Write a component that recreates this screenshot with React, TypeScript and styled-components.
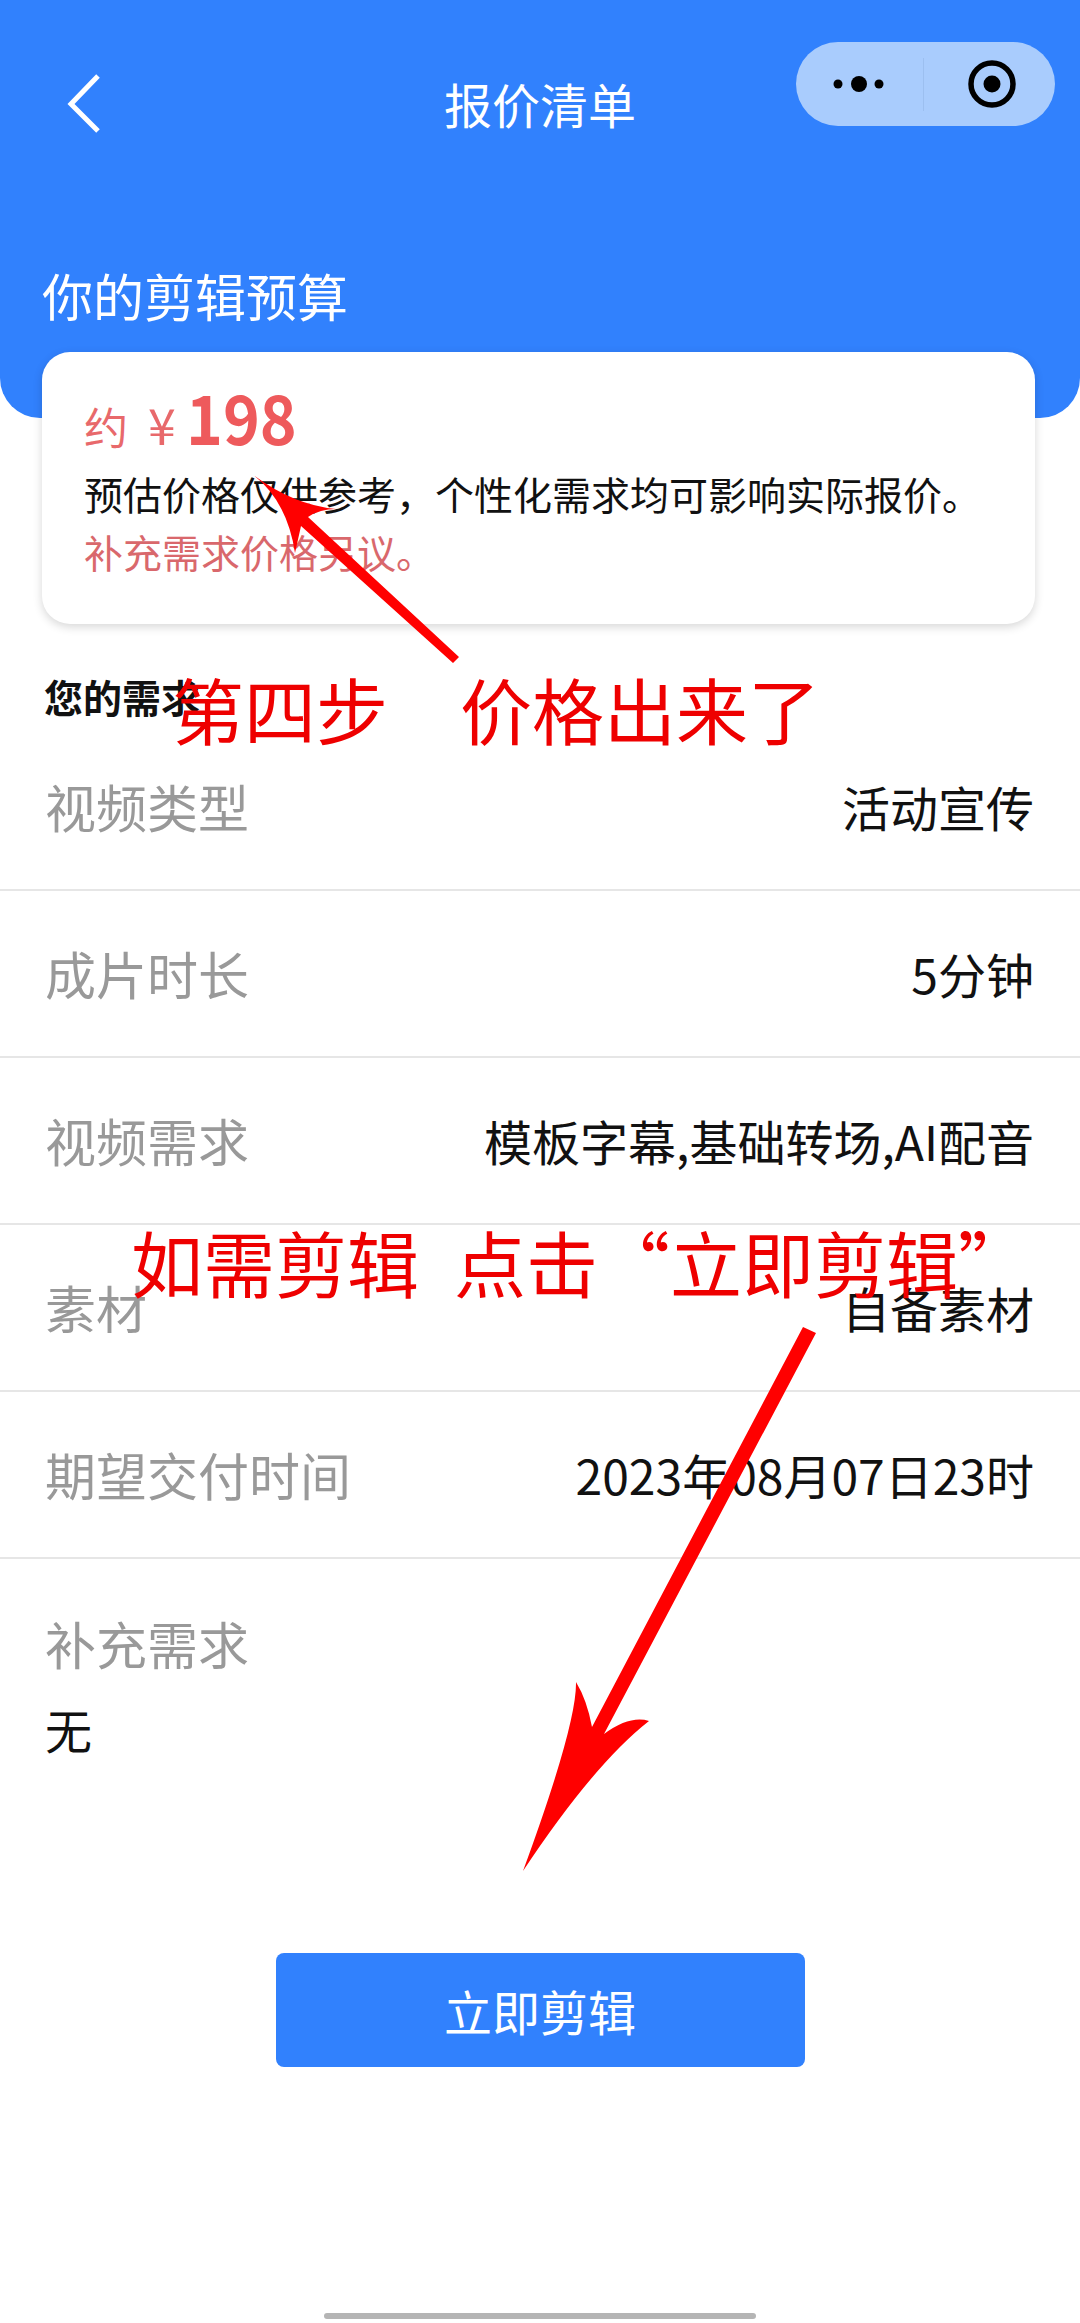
import React from "react";
import styled, { createGlobalStyle } from "styled-components";

const Global = createGlobalStyle`
  html, body { margin: 0; padding: 0; background: #fff; }
  body { font-family: "Noto Sans CJK SC", "Noto Sans", sans-serif; }
  * { box-sizing: border-box; }
`;

const Page = styled.div`
  position: relative;
  width: 1080px;
  height: 2323px;
  background: #fff;
  overflow: hidden;
`;

const Header = styled.header`
  height: 418px;
  background: #3181fd;
  border-radius: 0 0 40px 40px;
  padding: 42px 25px 0 42px;
`;

const NavBar = styled.div`
  position: relative;
  height: 84px;
  display: flex;
  align-items: flex-start;
  justify-content: space-between;
`;

const BackIcon = styled.svg`
  margin: 29px 0 0 22px;
`;

const NavTitle = styled.h1`
  position: absolute;
  left: -42px;
  right: -25px;
  top: 33px;
  margin: 0;
  text-align: center;
  font-size: 48px;
  line-height: 56px;
  font-weight: 400;
  color: #fff;
`;

const Capsule = styled.div`
  width: 259px;
  height: 84px;
  border-radius: 42px;
  background: #a9ccfd;
  display: flex;
  align-items: center;
`;

const CapsuleCell = styled.div<{ $inset?: number }>`
  flex: 1;
  height: 100%;
  display: flex;
  align-items: center;
  justify-content: center;
  padding-left: ${(p) => p.$inset ?? 0}px;
`;

const CapsuleDivider = styled.div`
  width: 1px;
  height: 53px;
  background: #9cbff0;
`;

const BudgetTitle = styled.h2`
  margin: 139px 0 0 0;
  font-size: 51px;
  line-height: 60px;
  font-weight: 400;
  color: #fff;
`;

const PriceCard = styled.section`
  margin: -66px 45px 0 42px;
  height: 272px;
  background: #fff;
  border-radius: 28px;
  box-shadow: 0 3px 10px rgba(0, 0, 0, 0.16);
  padding: 27px 42px 0;
  position: relative;
`;

const PriceRow = styled.div`
  display: flex;
  align-items: baseline;
  height: 85px;
  color: #ee5a5c;
`;

const PriceLabel = styled.span`
  font-size: 44px;
  line-height: 82px;
  margin-right: 20px;
  color: #e8696b;
`;

const PriceYen = styled.span`
  font-size: 50px;
  line-height: 82px;
  margin-right: 10px;
  color: #e8696b;
`;

const PriceValue = styled.span`
  display: inline-block;
  font-size: 68px;
  line-height: 74px;
  font-weight: 700;
  transform: scaleX(0.92);
  transform-origin: left center;
`;

const Note = styled.p<{ $accent?: boolean }>`
  margin: 0;
  font-size: 39px;
  line-height: 58px;
  white-space: nowrap;
  color: ${(p) => (p.$accent ? "#d9686c" : "#111")};
`;

const NeedsTitle = styled.h3`
  margin: 47px 0 0 44px;
  font-size: 39px;
  line-height: 50px;
  font-weight: 700;
  color: #111;
`;

const Rows = styled.div`
  margin-top: 3px;
`;

const Row = styled.div`
  height: 167px;
  padding: 0 46px 2px 45px;
  border-bottom: 2px solid #e6e6e6;
  display: flex;
  align-items: center;
  justify-content: space-between;
`;

const RowKey = styled.span`
  font-size: 51px;
  color: #999;
`;

const RowValue = styled.span`
  font-size: 48px;
  color: #111;
`;

const Extra = styled.div`
  padding: 52px 46px 0 45px;
  height: 394px;
`;

const ExtraValue = styled.div`
  margin-top: 24px;
  font-size: 47px;
  line-height: 60px;
  color: #111;
`;

const ExtraKey = styled.div`
  font-size: 51px;
  line-height: 64px;
  color: #999;
`;

const CutButton = styled.button`
  display: block;
  margin: 0 auto;
  width: 529px;
  height: 114px;
  border: 0;
  border-radius: 8px;
  background: #3181fd;
  color: #fff;
  font-family: inherit;
  font-size: 48px;
`;

const HomeBar = styled.div`
  position: absolute;
  left: 324px;
  bottom: 4px;
  width: 432px;
  height: 6px;
  border-radius: 3px;
  background: #b5b5b5;
`;

const Annotation = styled.div<{ $x: number; $y: number }>`
  position: absolute;
  left: ${(p) => p.$x}px;
  top: ${(p) => p.$y}px;
  font-size: 72px;
  line-height: 84px;
  color: #ee0000;
  white-space: nowrap;
`;

const Arrows = styled.svg`
  position: absolute;
  left: 0;
  top: 0;
  pointer-events: none;
`;

const rows = [
  ["视频类型", "活动宣传"],
  ["成片时长", "5分钟"],
  ["视频需求", "模板字幕,基础转场,AI配音"],
  ["素材", "自备素材"],
  ["期望交付时间", "2023年08月07日23时"],
];

export default function App() {
  return (
    <Page>
      <Global />
      <Header>
        <NavBar>
          <BackIcon width="40" height="64" viewBox="0 0 40 64" fill="none">
            <path d="M34 5 L7 33 L34 60" stroke="#fff" strokeWidth="5" />
          </BackIcon>
          <NavTitle>报价清单</NavTitle>
          <Capsule>
            <CapsuleCell>
              <svg width="52" height="20" viewBox="0 0 52 20">
                <circle cx="5" cy="10" r="4.5" fill="#000" />
                <circle cx="26" cy="10" r="8" fill="#000" />
                <circle cx="46" cy="10" r="4.5" fill="#000" />
              </svg>
            </CapsuleCell>
            <CapsuleDivider />
            <CapsuleCell $inset={5}>
              <svg width="50" height="50" viewBox="0 0 50 50" fill="none">
                <circle cx="25" cy="25" r="21" stroke="#000" strokeWidth="5.5" />
                <circle cx="25" cy="25" r="8.5" fill="#000" />
              </svg>
            </CapsuleCell>
          </Capsule>
        </NavBar>
        <BudgetTitle>你的剪辑预算</BudgetTitle>
      </Header>
      <PriceCard>
        <PriceRow>
          <PriceLabel>约</PriceLabel>
          <PriceYen>¥</PriceYen>
          <PriceValue>198</PriceValue>
        </PriceRow>
        <Note>预估价格仅供参考，个性化需求均可影响实际报价。</Note>
        <Note $accent>补充需求价格另议。</Note>
      </PriceCard>
      <NeedsTitle>您的需求</NeedsTitle>
      <Rows>
        {rows.map(([k, v]) => (
          <Row key={k}>
            <RowKey>{k}</RowKey>
            <RowValue>{v}</RowValue>
          </Row>
        ))}
      </Rows>
      <Extra>
        <ExtraKey>补充需求</ExtraKey>
        <ExtraValue>无</ExtraValue>
      </Extra>
      <CutButton>立即剪辑</CutButton>
      <HomeBar />

      <Arrows width="1080" height="2323" viewBox="0 0 1080 2323">
        <path d="M252 474 Q293 505 336 509 Q320 509 308 517 L459 657 L453 663 L301 526 L295 553 Q287 500 252 474 Z" fill="#ff0000" />
        <path d="M816 1333 L604 1734 Q630 1715 649 1721 Q594 1764 523 1871 Q577 1724 576 1682 Q587 1700 592 1727 L803 1327 Z" fill="#ff0000" />
      </Arrows>
      <Annotation $x={172} $y={666}>第四步</Annotation>
      <Annotation $x={460} $y={666}>价格出来了</Annotation>
      <Annotation $x={131} $y={1219}>如需剪辑</Annotation>
      <Annotation $x={454} $y={1219}>点击“立即剪辑”</Annotation>
    </Page>
  );
}
